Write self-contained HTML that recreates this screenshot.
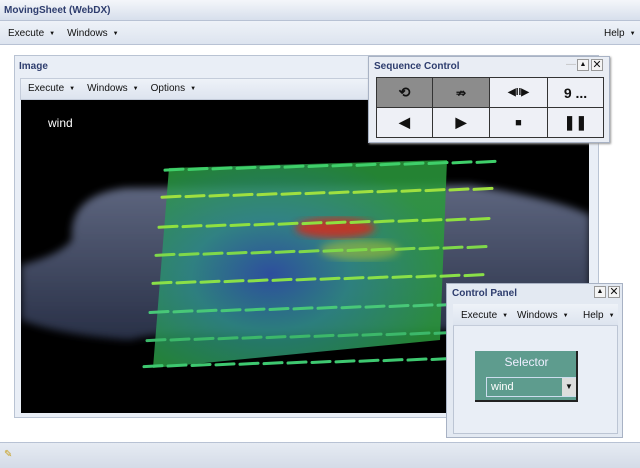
<!DOCTYPE html>
<html><head><style>
*{margin:0;padding:0;box-sizing:border-box}
body{width:640px;height:468px;overflow:hidden;background:#eef2f8;font-family:"Liberation Sans",sans-serif;font-size:10px;color:#111;position:relative}
.abs{position:absolute}
.menu span{margin-right:12px}
.tri{font-size:6px;margin-left:5px;vertical-align:1px}
.ttl{font-weight:bold;color:#2e3d6e;font-size:10px}
.btn{position:absolute;border:1px solid #333;display:flex;align-items:center;justify-content:center;font-weight:bold;font-size:14px;background:#eef0f6;color:#111}
</style></head><body>
<div class="abs" style="left:0;top:0;width:640px;height:21px;background:linear-gradient(#f4f6fa,#d7dfec);border-bottom:1px solid #b8c2d4"></div>
<div class="abs ttl" style="left:4px;top:5px">MovingSheet (WebDX)</div>
<div class="abs" style="left:0;top:21px;width:640px;height:24px;background:linear-gradient(#eef2f8,#dde4ef);border-bottom:1px solid #b8c2d4"></div>
<div class="abs menu" style="left:8px;top:28px"><span>Execute<b class="tri">▼</b></span><span>Windows<b class="tri">▼</b></span></div>
<div class="abs" style="left:604px;top:28px">Help<b class="tri">▼</b></div>
<div class="abs" style="left:0;top:45px;width:640px;height:397px;background:#fff"></div>
<div class="abs" style="left:14px;top:55px;width:585px;height:363px;background:#e9eef6;border:1px solid #b9c3d3"></div>
<div class="abs ttl" style="left:19px;top:61px">Image</div>
<div class="abs" style="left:20px;top:78px;width:573px;height:22px;background:linear-gradient(#eef2f8,#dde4ef);border:1px solid #c4ccda"></div>
<div class="abs menu" style="left:28px;top:83px;font-size:10px"><span>Execute<b class="tri">▼</b></span><span>Windows<b class="tri">▼</b></span><span>Options<b class="tri">▼</b></span></div>
<svg class="abs" style="left:21px;top:100px" width="568" height="313" viewBox="21 100 568 313">
<defs>
<radialGradient id="g1" cx="0.4" cy="0.55" r="0.6"><stop offset="0" stop-color="#2a50a8"/><stop offset="0.45" stop-color="#2c8a86"/><stop offset="1" stop-color="#2a9a3c"/></radialGradient>
<linearGradient id="gb" x1="0" y1="0" x2="0" y2="1"><stop offset="0" stop-color="#7d88aa"/><stop offset="1" stop-color="#36405e"/></linearGradient>
<filter id="bl"><feGaussianBlur stdDeviation="4"/></filter>
</defs>
<rect x="21" y="100" width="568" height="313" fill="#000"/>
<path d="M21 265 Q60 255 72 240 Q68 195 125 188 L470 185 Q560 200 590 215 L590 300 Q520 330 430 330 L250 335 Q160 330 130 340 Q60 335 21 320Z" fill="url(#gb)" opacity="0.75" filter="url(#bl)"/>
<polygon points="169,168 447,160 440,340 153,368" fill="url(#g1)" opacity="0.85"/>
<ellipse cx="335" cy="228" rx="40" ry="10" fill="#d42a1a" opacity="0.85" filter="url(#bl)"/>
<ellipse cx="360" cy="250" rx="40" ry="10" fill="#c8d020" opacity="0.45" filter="url(#bl)"/>
<g id="ar" stroke-width="3" stroke-linecap="round"></g>
<text x="48" y="127" fill="#fff" font-size="12" font-family="Liberation Sans">wind</text>
</svg>
<script>
var g=document.getElementById('ar'),s='';
var rows=[[170,'#3fcf6a'],[197,'#9fe040'],[227,'#8fe040'],[255,'#7fd84a'],[283,'#8ae048'],[312,'#48c878'],[340,'#3cb86a'],[366,'#3ec870']];
rows.forEach(function(r,i){for(var x=165-i*3;x<480;x+=24){var y=r[0]-(x-170)*0.025;s+='<line x1="'+x+'" y1="'+y+'" x2="'+(x+18)+'" y2="'+(y-1)+'" stroke="'+r[1]+'"/>';}});
g.innerHTML=s;
</script>
<div class="abs" style="left:0;top:442px;width:640px;height:26px;background:linear-gradient(#e6ebf3,#d4dbe7);border-top:1px solid #b8c2d4"></div>
<div class="abs" style="left:4px;top:449px;color:#c8a020;font-size:10px">✎</div>
<div class="abs" style="left:368px;top:56px;width:242px;height:87px;background:#e9edf4;border:1px solid #a8b2c4;box-shadow:1px 1px 2px #999"></div>
<div class="abs ttl" style="left:374px;top:61px">Sequence Control</div>
<div class="abs" style="left:566px;top:59px;color:#bbb;font-size:10px">—</div>
<div class="abs" style="left:577px;top:59px;width:12px;height:12px;border:1px solid #999;background:#f4f4f4;font-size:7px;text-align:center;line-height:10px">▲</div>
<div class="abs" style="left:591px;top:59px;width:12px;height:12px;border:1px solid #999;background:#f4f4f4;font-size:11px;text-align:center;line-height:10px">✕</div>
<div class="btn" style="left:376px;top:77px;width:57px;height:31px;background:#8c8c8c">⟲</div>
<div class="btn" style="left:432px;top:77px;width:58px;height:31px;background:#8c8c8c;font-size:12px">⇏</div>
<div class="btn" style="left:489px;top:77px;width:59px;height:31px;font-size:10px">◀II▶</div>
<div class="btn" style="left:547px;top:77px;width:57px;height:31px">9 ...</div>
<div class="btn" style="left:376px;top:107px;width:57px;height:31px">◀</div>
<div class="btn" style="left:432px;top:107px;width:58px;height:31px">▶</div>
<div class="btn" style="left:489px;top:107px;width:59px;height:31px;font-size:11px">■</div>
<div class="btn" style="left:547px;top:107px;width:57px;height:31px">❚❚</div>
<div class="abs" style="left:446px;top:283px;width:177px;height:155px;background:#e3e9f2;border:1px solid #a8b2c4"></div>
<div class="abs ttl" style="left:452px;top:288px">Control Panel</div>
<div class="abs" style="left:594px;top:286px;width:12px;height:12px;border:1px solid #999;background:#f4f4f4;font-size:7px;text-align:center;line-height:10px">▲</div>
<div class="abs" style="left:608px;top:286px;width:12px;height:12px;border:1px solid #999;background:#f4f4f4;font-size:11px;text-align:center;line-height:10px">✕</div>
<div class="abs" style="left:453px;top:304px;width:165px;height:130px;background:#e9eef6;border:1px solid #bcc5d4"></div>
<div class="abs" style="left:453px;top:304px;width:165px;height:22px;background:linear-gradient(#eef2f8,#dde4ef);border-bottom:1px solid #c4ccda"></div>
<div class="abs" style="left:461px;top:310px">Execute<b class="tri">▼</b></div>
<div class="abs" style="left:517px;top:310px">Windows<b class="tri">▼</b></div>
<div class="abs" style="left:583px;top:310px">Help<b class="tri">▼</b></div>
<div class="abs" style="left:475px;top:351px;width:103px;height:51px;background:#5e9c8e;border-right:2px solid #222;border-bottom:2px solid #222"></div>
<div class="abs" style="left:475px;top:355px;width:103px;text-align:center;color:#eef;font-size:12px">Selector</div>
<div class="abs" style="left:486px;top:377px;width:90px;height:20px;border:1px solid #cde;background:#5e9c8e;color:#fff;font-size:11px;padding:3px 4px">wind</div>
<div class="abs" style="left:562px;top:378px;width:14px;height:18px;background:#ddd;font-size:8px;text-align:center;line-height:18px">▼</div>
</body></html>
